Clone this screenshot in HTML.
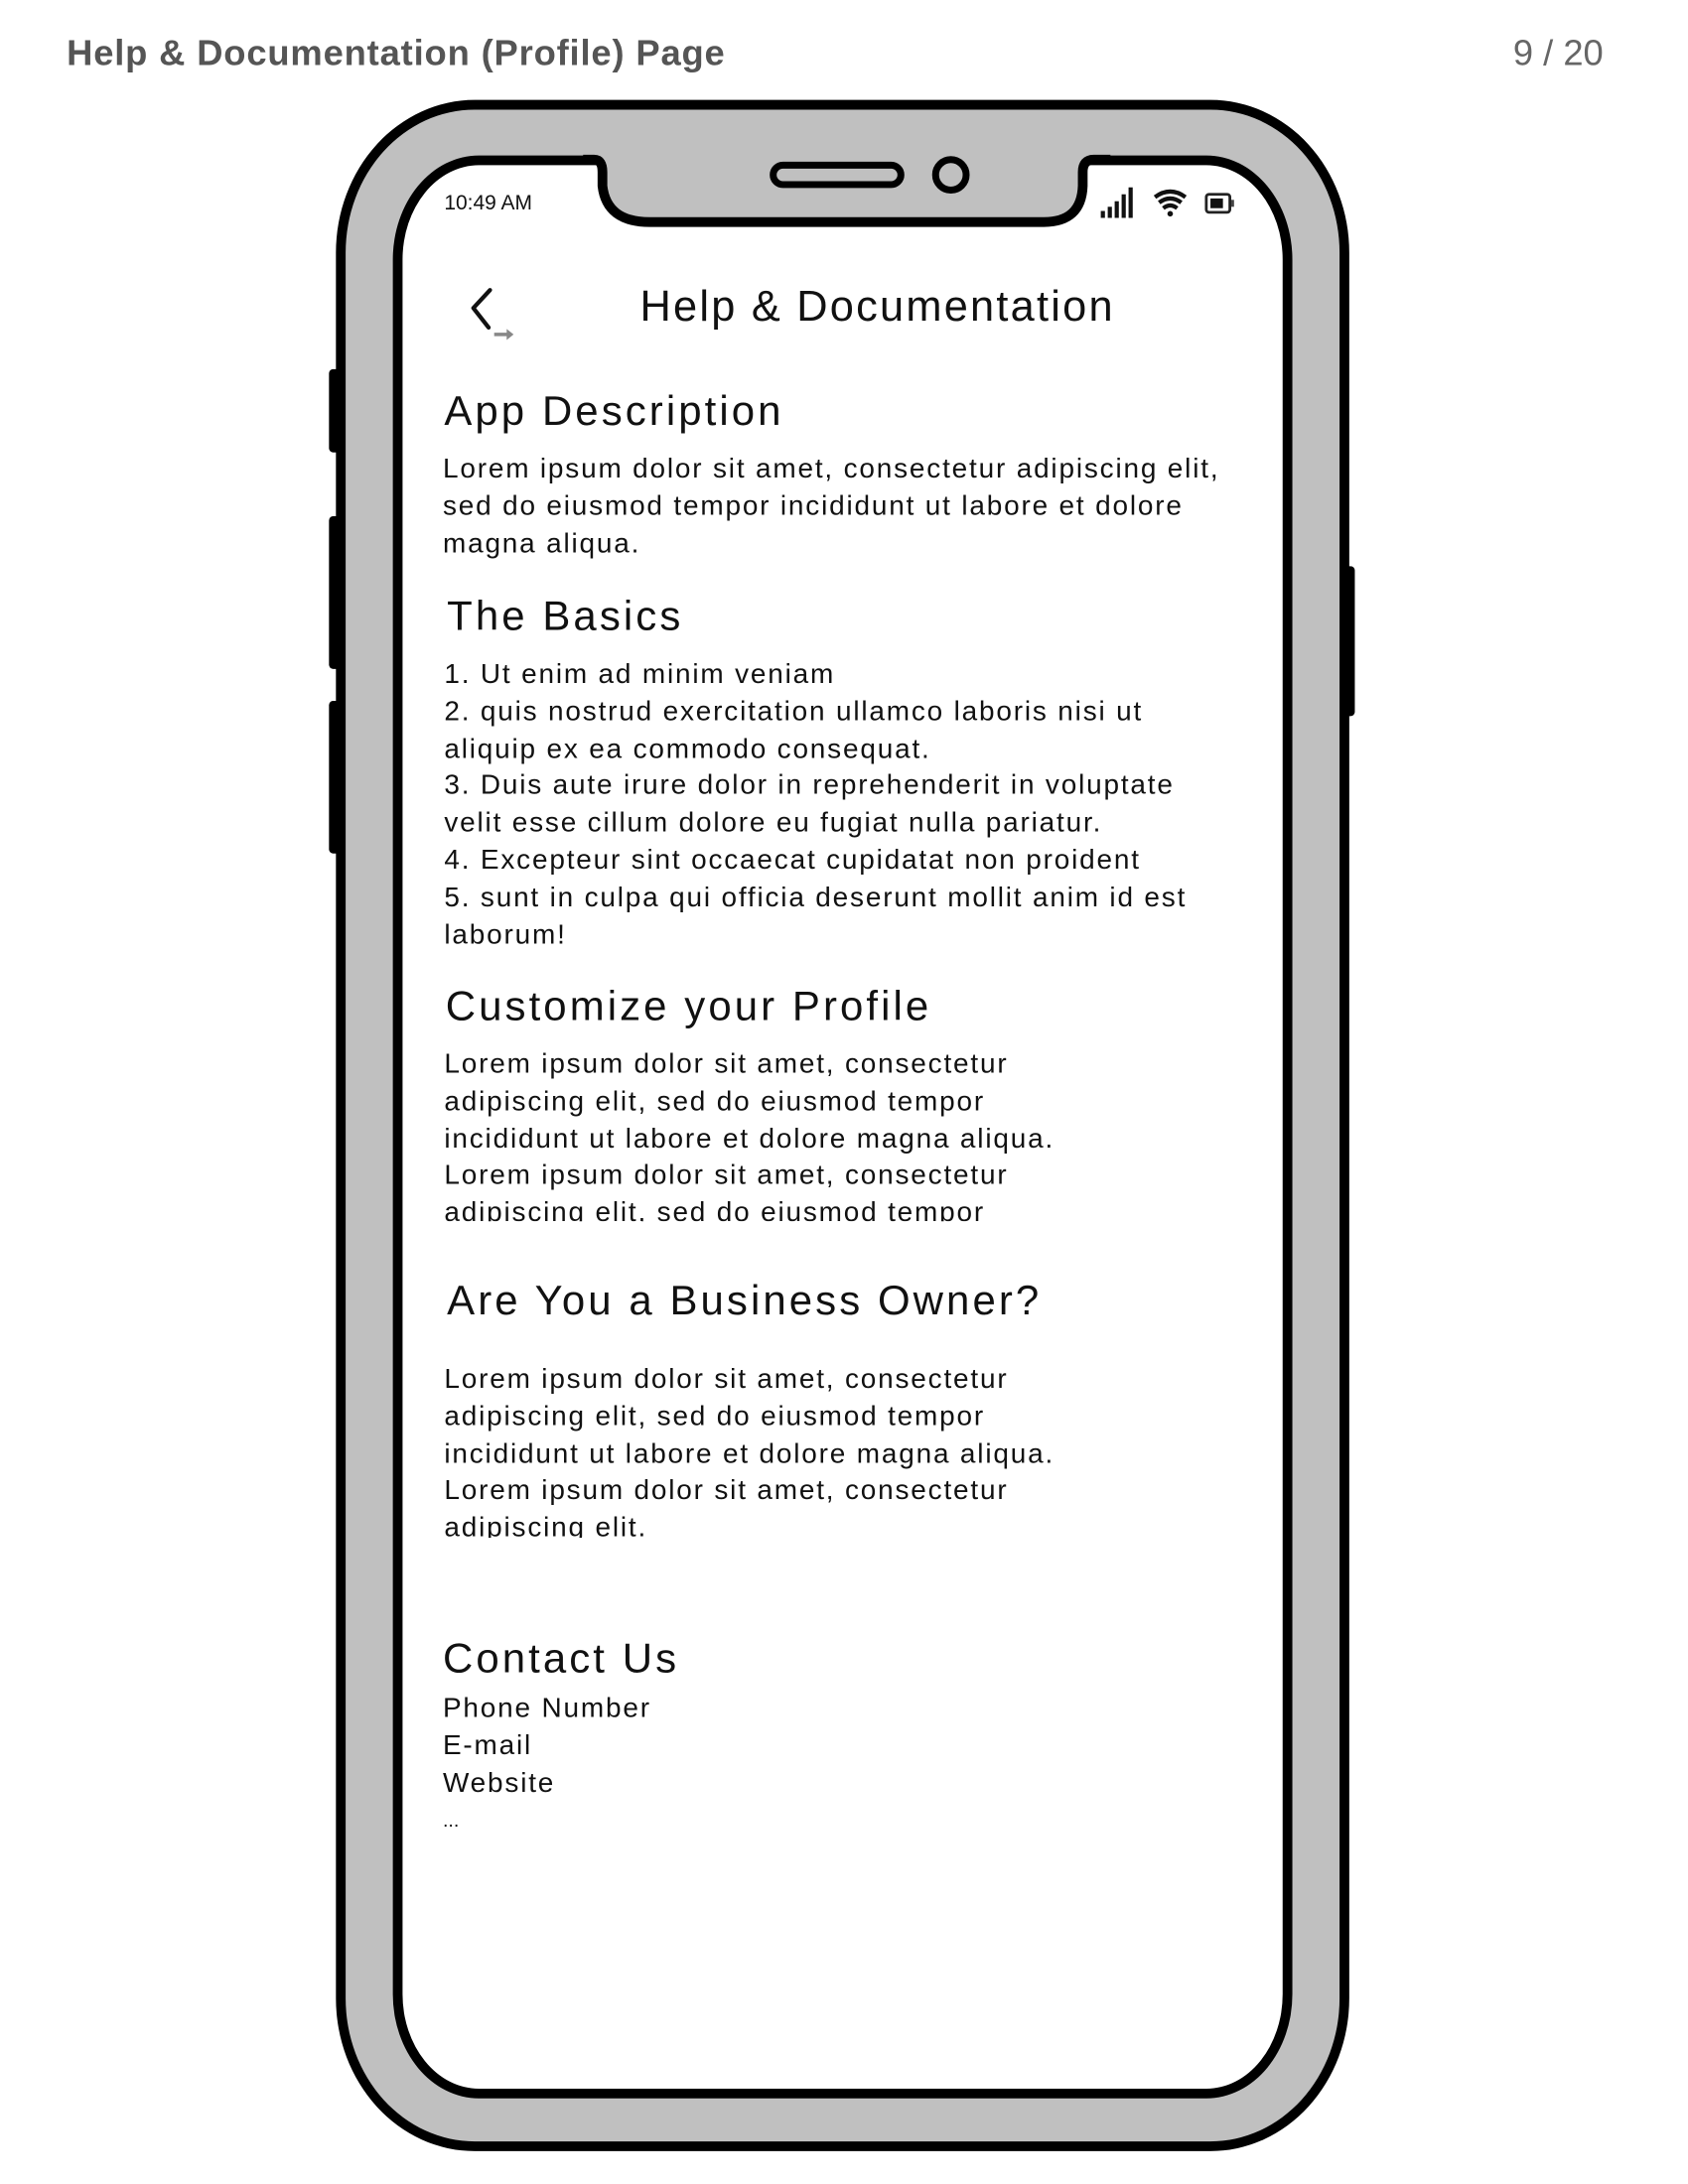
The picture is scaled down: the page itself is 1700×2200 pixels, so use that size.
<!DOCTYPE html>
<html><head><meta charset="utf-8">
<style>
html,body{margin:0;padding:0;background:#fff;width:1700px;height:2200px;overflow:hidden}
#w{position:absolute;left:0;top:0;width:1216px;height:1574px;transform:scale(1.398);transform-origin:0 0;font-family:"Liberation Sans",sans-serif;color:#111}
.a{position:absolute;white-space:nowrap}
.h{font-size:30px;line-height:34px;letter-spacing:2.2px}
.b{font-size:20px;line-height:26.8px;letter-spacing:1.3px}
</style></head><body>
<div id="w">
<div class="a" style="left:48px;top:23px;font-size:26px;font-weight:bold;color:#555;letter-spacing:0.6px">Help &amp; Documentation (Profile) Page</div>
<div class="a" style="left:1090px;top:23px;font-size:26px;color:#666">9 / 20</div>

<div class="a" style="left:237px;top:266px;width:10px;height:60px;background:#000;border-radius:3px"></div>
<div class="a" style="left:237px;top:372px;width:10px;height:110px;background:#000;border-radius:3px"></div>
<div class="a" style="left:237px;top:505px;width:10px;height:110px;background:#000;border-radius:3px"></div>
<div class="a" style="left:965px;top:408px;width:11px;height:108px;background:#000;border-radius:3px"></div>

<div class="a" style="left:242px;top:72px;width:716px;height:1464px;background:#c0c0c0;border:7px solid #000;border-radius:100px/110px"></div>
<div class="a" style="left:283px;top:112px;width:634px;height:1386px;background:#fff;border:7px solid #000;border-radius:62px/75px"></div>

<svg class="a" style="left:420px;top:100px" width="380" height="72" viewBox="0 0 380 72">
<path d="M0 12 L10 12 Q16 12 16 22 L16 34 Q18 62 48 62 L332 62 Q360 62 362 34 L362 22 Q362 12 372 12 L380 12 L380 0 L0 0 Z" fill="#c0c0c0"/>
<path d="M0 15 L8 15 Q14 15 14 24 L14 34 Q17 60 48 60 L332 60 Q359 60 360 34 L360 24 Q360 15 368 15 L380 15" fill="none" stroke="#000" stroke-width="7"/>
<rect x="137" y="19" width="92" height="14" rx="7" fill="none" stroke="#000" stroke-width="5"/>
<ellipse cx="265" cy="26" rx="11" ry="11" fill="none" stroke="#000" stroke-width="5"/>
</svg>

<div class="a" style="left:320px;top:138px;font-size:15px">10:49 AM</div>
<svg class="a" style="left:790px;top:133px" width="106" height="28" viewBox="0 0 106 28">
<rect x="3" y="19" width="3" height="5" fill="#111"/><rect x="8" y="16" width="3" height="8" fill="#111"/><rect x="13" y="12" width="3" height="12" fill="#111"/><rect x="18" y="7" width="3" height="17" fill="#111"/><rect x="23" y="2" width="3" height="22" fill="#111"/>
<path d="M42 9 Q53 1 64 9" fill="none" stroke="#111" stroke-width="3"/><path d="M45 13 Q53 7 61 13" fill="none" stroke="#111" stroke-width="3"/><path d="M48 17 Q53 13 58 17" fill="none" stroke="#111" stroke-width="3"/><circle cx="53" cy="21" r="2" fill="#111"/>
<rect x="79" y="7" width="17" height="13" rx="2" fill="#fff" stroke="#222" stroke-width="2"/><rect x="82" y="10" width="9" height="7" fill="#111"/><rect x="97" y="11" width="2" height="5" fill="#444"/>
</svg>

<svg class="a" style="left:334px;top:204px" width="44" height="44" viewBox="0 0 44 44">
<path d="M19 5 L7 18 L18 32" fill="none" stroke="#111" stroke-width="3" stroke-linecap="round" stroke-linejoin="round"/>
<path d="M22 37 L34 37" stroke="#888" stroke-width="2.5"/><path d="M31 33 L36 37 L31 41 Z" fill="#888"/>
</svg>
<div class="a" style="left:461px;top:202px;font-size:31px;line-height:38px;letter-spacing:1.6px">Help &amp; Documentation</div>

<div class="a h" style="left:320px;top:280px">App Description</div>
<div class="a b" style="left:319px;top:325px">Lorem ipsum dolor sit amet, consectetur adipiscing elit,<br>sed do eiusmod tempor incididunt ut labore et dolore<br>magna aliqua.</div>

<div class="a h" style="left:322px;top:428px">The Basics</div>
<div class="a b" style="left:320px;top:473px">1. Ut enim ad minim veniam<br>2. quis nostrud exercitation ullamco laboris nisi ut<br>aliquip ex ea commodo consequat.<br>3. Duis aute irure dolor in reprehenderit in voluptate<br>velit esse cillum dolore eu fugiat nulla pariatur.<br>4. Excepteur sint occaecat cupidatat non proident<br>5. sunt in culpa qui officia deserunt mollit anim id est<br>laborum!</div>

<div class="a h" style="left:321px;top:709px">Customize your Profile</div>
<div class="a b" style="left:320px;top:754px;height:126px;overflow:hidden">Lorem ipsum dolor sit amet, consectetur<br>adipiscing elit, sed do eiusmod tempor<br>incididunt ut labore et dolore magna aliqua.<br>Lorem ipsum dolor sit amet, consectetur<br>adipiscing elit, sed do eiusmod tempor</div>

<div class="a h" style="left:322px;top:921px">Are You a Business Owner?</div>
<div class="a b" style="left:320px;top:981px;height:127px;overflow:hidden">Lorem ipsum dolor sit amet, consectetur<br>adipiscing elit, sed do eiusmod tempor<br>incididunt ut labore et dolore magna aliqua.<br>Lorem ipsum dolor sit amet, consectetur<br>adipiscing elit.</div>

<div class="a h" style="left:319px;top:1179px">Contact Us</div>
<div class="a b" style="left:319px;top:1218px">Phone Number<br>E-mail<br>Website</div>
<div class="a" style="left:319px;top:1303px;font-size:14px">...</div>
</div>
</body></html>
